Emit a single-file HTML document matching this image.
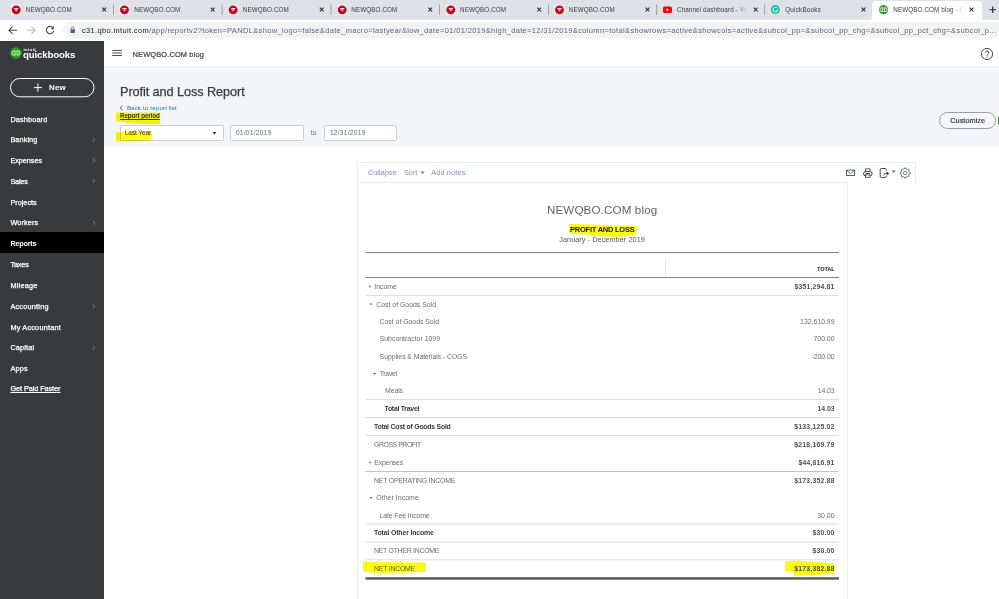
<!DOCTYPE html>
<html lang="en">
<head>
<meta charset="utf-8">
<title>NEWQBO.COM blog - QuickBooks</title>
<style>
*{box-sizing:border-box;margin:0;padding:0}
html,body{width:999px;height:599px;overflow:hidden;background:#fff}
body{position:relative;font-family:"Liberation Sans",sans-serif}
.t{position:absolute;white-space:nowrap}
.a{position:absolute}
.yt,.act{overflow:hidden;width:72px;-webkit-mask-image:linear-gradient(90deg,#000 82%,transparent 98%);mask-image:linear-gradient(90deg,#000 82%,transparent 98%)}
#tabbar{left:0;top:0;width:999px;height:19.5px;background:#dee1e6}
#addr{left:0;top:19.5px;width:999px;height:21.5px;background:#fff}
#pill{left:62.6px;top:21.7px;width:940px;height:16.8px;border-radius:9px;background:#f1f3f4}
#side{left:0;top:41px;width:104px;height:558px;background:#393a3d}
#active{left:0;top:232px;width:104px;height:21px;background:#000}
#hdr{left:104px;top:41px;width:895px;height:25px;background:#fff}
#gray{left:104px;top:66px;width:895px;height:81px;background:#f4f5f8}
.sep{width:1px;height:10px;top:5px;background:#9a9da3}
.inp{background:#fff;border:1px solid #cbced4;border-radius:1.5px;top:124.8px;height:16px}
.hl{background:#fcf81c}
.ln{height:1px;background:#e3e4e6;left:365.5px;width:473.5px}
</style>
</head>
<body>
<div class="a" id="tabbar"></div>
<div class="a" id="addr"></div>
<div class="a" id="pill"></div>
<div class="a" id="side"></div>
<div class="a" id="active"></div>
<div class="a" id="hdr"></div>
<div class="a" id="gray"></div>
<!-- ===== tab bar ===== -->
<div class="a" id="acttab" style="left:871.5px;top:1px;width:110px;height:19.5px;background:#fff;border-radius:4px 4px 0 0"></div>
<svg class="a" style="left:0;top:0" width="999" height="41" viewBox="0 0 999 41">
  <!-- active tab foot curves -->
  <path d="M868.5 20 Q871.5 20 871.5 17 V20 Z" fill="#fff"/>
  <path d="M984.5 20 Q981.5 20 981.5 17 V20 Z" fill="#fff"/>
  <!-- favicons: red circles -->
  <g id="fav">
    <g fill="#eceef2"><rect x="11.1" y="4.7" width="10.2" height="10.2" rx="1"/><rect x="119.4" y="4.7" width="10.2" height="10.2" rx="1"/><rect x="228.0" y="4.7" width="10.2" height="10.2" rx="1"/><rect x="337.1" y="4.7" width="10.2" height="10.2" rx="1"/><rect x="445.7" y="4.7" width="10.2" height="10.2" rx="1"/><rect x="554.4" y="4.7" width="10.2" height="10.2" rx="1"/></g>
    <g fill="#d0021b"><circle cx="16.2" cy="9.85" r="4.45"/><circle cx="124.5" cy="9.85" r="4.45"/><circle cx="233.1" cy="9.85" r="4.45"/><circle cx="342.2" cy="9.85" r="4.45"/><circle cx="450.8" cy="9.85" r="4.45"/><circle cx="559.5" cy="9.85" r="4.45"/></g>
    <g fill="#fff" opacity=".92"><path d="M14.05 7.9h4.3l-.35 1.5h-3.6zM15.10 9.9h2.2l-1.1 1.5z"/><path d="M122.35 7.9h4.3l-.35 1.5h-3.6zM123.40 9.9h2.2l-1.1 1.5z"/><path d="M230.95 7.9h4.3l-.35 1.5h-3.6zM232.00 9.9h2.2l-1.1 1.5z"/><path d="M340.05 7.9h4.3l-.35 1.5h-3.6zM341.10 9.9h2.2l-1.1 1.5z"/><path d="M448.65 7.9h4.3l-.35 1.5h-3.6zM449.70 9.9h2.2l-1.1 1.5z"/><path d="M557.35 7.9h4.3l-.35 1.5h-3.6zM558.40 9.9h2.2l-1.1 1.5z"/></g>
  </g>
  <!-- youtube -->
  <rect x="663" y="6.6" width="9" height="6.3" rx="1.6" fill="#f00"/>
  <path d="M666.5 8.2l2.7 1.55-2.7 1.55z" fill="#fff"/>
  <!-- grammarly-like G -->
  <circle cx="775.3" cy="9.6" r="4.5" fill="#15c39a"/>
  <path d="M777.4 8.3a2.4 2.4 0 1 0 .3 2.1h-2" fill="none" stroke="#fff" stroke-width="1"/>
  <!-- qb active favicon -->
  <circle cx="883.5" cy="9.7" r="4.6" fill="#2ca01c"/>
  <path d="M882.6 7.7h-.6a2 2 0 0 0 0 4h.3M884.4 11.7h.6a2 2 0 0 0 0-4h-.3M882.6 7.7v4.4M884.4 7.3v4.4" stroke="#fff" stroke-width=".8" fill="none"/>
  <!-- close x marks -->
  <g stroke="#202124" stroke-width="1.05" fill="none">
    <path d="M102.3 7.7l3.8 3.8m0-3.8l-3.8 3.8"/>
    <path d="M210.8 7.7l3.8 3.8m0-3.8l-3.8 3.8"/>
    <path d="M319.8 7.7l3.8 3.8m0-3.8l-3.8 3.8"/>
    <path d="M428.3 7.7l3.8 3.8m0-3.8l-3.8 3.8"/>
    <path d="M537.3 7.7l3.8 3.8m0-3.8l-3.8 3.8"/>
    <path d="M645.6 7.7l3.8 3.8m0-3.8l-3.8 3.8"/>
    <path d="M753.8 7.7l3.8 3.8m0-3.8l-3.8 3.8"/>
    <path d="M861.6 7.7l3.8 3.8m0-3.8l-3.8 3.8"/>
    <path d="M969.6 7.7l3.8 3.8m0-3.8l-3.8 3.8"/>
    <path d="M989.5 9.7h6.4m-3.2-3.2v6.4" stroke-width="1.1"/>
  </g>
  <!-- separators -->
  <g fill="#8d9095">
    <rect x="113" y="4.5" width=".8" height="10.5"/><rect x="221.7" y="4.5" width=".8" height="10.5"/>
    <rect x="330.6" y="4.5" width=".8" height="10.5"/><rect x="439" y="4.5" width=".8" height="10.5"/>
    <rect x="548.2" y="4.5" width=".8" height="10.5"/><rect x="656.3" y="4.5" width=".8" height="10.5"/>
    <rect x="764.3" y="4.5" width=".8" height="10.5"/>
  </g>
  <!-- nav arrows -->
  <g stroke="#4a4d51" stroke-width="1.1" fill="none" stroke-linecap="round" stroke-linejoin="round">
    <path d="M16.6 30.3H9m3.3-3.4L8.9 30.3l3.4 3.4"/>
    <path d="M27.4 30.3H35m-3.3-3.4l3.4 3.4-3.4 3.4" stroke="#b8bbbf"/>
    <path d="M53 27.7a3.7 3.7 0 1 0 .6 3.6"/>
  </g>
  <path d="M53.9 26v3.3h-3.3z" fill="#4a4d51"/>
  <!-- lock -->
  <rect x="70.4" y="29.2" width="4.6" height="3.8" rx=".5" fill="#5f6368"/>
  <path d="M71.4 29.4v-1.1a1.3 1.3 0 0 1 2.6 0v1.1" fill="none" stroke="#5f6368" stroke-width=".8"/>
</svg>
<!-- ===== QBO header ===== -->
<svg class="a" style="left:104px;top:41px" width="895" height="25" viewBox="104 41 895 25">
  <g stroke="#393a3d" stroke-width="0.9"><path d="M112.2 50.4h9.7M112.2 52.95h9.7M112.2 55.5h9.7"/></g>
  <circle cx="987" cy="54" r="5.6" fill="none" stroke="#393a3d" stroke-width=".9"/>
  <path d="M985.4 52.6a1.7 1.7 0 1 1 2.5 1.5c-.6.4-.9.7-.9 1.4" fill="none" stroke="#393a3d" stroke-width=".9"/>
  <circle cx="987" cy="57.1" r=".6" fill="#393a3d"/>
</svg>
<!-- ===== sidebar ===== -->
<svg class="a" style="left:0;top:41px" width="104" height="558" viewBox="0 41 104 558">
  <circle cx="16" cy="53" r="5.7" fill="#2ca01c"/>
  <path d="M15 50.9h-.9a2.1 2.1 0 0 0 0 4.2h.2M17 55.1h.9a2.1 2.1 0 0 0 0-4.2h-.2M15 50.9v4.9M17 50.2v4.9" stroke="#fff" stroke-width=".85" fill="none"/>
  <rect x="10.5" y="78.5" width="83.5" height="18.3" rx="9.15" fill="none" stroke="#fff" stroke-width="1"/>
  <path d="M33.8 87.6h8.2M37.9 83.5v8.2" stroke="#fff" stroke-width="1"/>
  <g stroke="#8d9096" stroke-width=".8" fill="none">
    <path d="M92.8 137.6l2 2.1-2 2.1"/><path d="M92.8 158.2l2 2.1-2 2.1"/><path d="M92.8 178.9l2 2.1-2 2.1"/>
    <path d="M92.8 220.6l2 2.1-2 2.1"/><path d="M92.8 304.3l2 2.1-2 2.1"/><path d="M92.8 345.6l2 2.1-2 2.1"/>
  </g>
</svg>
<!-- ===== filter area ===== -->
<svg class="a" style="left:104px;top:100px" width="160" height="50" viewBox="104 100 160 50">
  <path d="M122.3 105.6l-1.9 2.3 1.9 2.3" stroke="#0077c5" stroke-width="1" fill="none"/>
</svg>
<div class="a inp" style="left:119.5px;width:104.3px"></div>
<div class="a inp" style="left:230.2px;width:73.4px"></div>
<div class="a inp" style="left:324px;width:73.2px"></div>
<svg class="a" style="left:104px;top:120px" width="160" height="30" viewBox="104 120 160 30">
  <path d="M212.6 131.9h3.8l-1.9 2.6z" fill="#222"/>
</svg>
<div class="a" style="left:939px;top:111.5px;width:56.8px;height:17.4px;border:1px solid #9a9da3;border-radius:9px;background:#f6f7f9"></div>
<div class="a" style="left:997.7px;top:115.5px;width:3px;height:9px;background:#2ca01c;border-radius:2px 0 0 2px"></div>
<!-- ===== report card ===== -->
<div class="a" style="left:357px;top:162px;width:558.7px;height:21px;border:1px solid #e9eef5;border-bottom:none"></div>
<div class="a" style="left:357px;top:182px;width:491px;height:420px;border:1px solid #e9eef5"></div>
<svg class="a" style="left:400px;top:160px" width="520" height="26" viewBox="400 160 520 26">
  <path d="M420.4 171.6h4.2l-2.1 2.4z" fill="#6b7c93"/>
  <!-- mail -->
  <rect x="846.4" y="170.1" width="8.3" height="5.3" fill="none" stroke="#393a3d" stroke-width=".8"/>
  <path d="M846.6 170.4l3.95 3.2 3.95-3.2" fill="none" stroke="#393a3d" stroke-width=".8"/>
  <!-- print -->
  <path d="M865.5 171.4v-2.6h4.6v2.6" fill="none" stroke="#393a3d" stroke-width=".8"/>
  <rect x="863.6" y="171.6" width="8.4" height="4.1" rx="1.7" fill="#fff" stroke="#393a3d" stroke-width="1"/>
  <rect x="865.6" y="174.9" width="4.4" height="2.4" fill="#fff" stroke="#393a3d" stroke-width=".8"/>
  <path d="M865.4 173.5h4.8" stroke="#393a3d" stroke-width=".9"/>
  <!-- export -->
  <path d="M886.3 170.6v-1a1.1 1.1 0 0 0-1.1-1.1h-3.9a1.1 1.1 0 0 0-1.1 1.1v6.7a1.1 1.1 0 0 0 1.1 1.1h3.9a1.1 1.1 0 0 0 1.1-1.1v-.7" fill="none" stroke="#393a3d" stroke-width=".95"/>
  <path d="M883.6 175.3c.3-1.5 1.3-2 3.4-2" fill="none" stroke="#393a3d" stroke-width=".95"/>
  <path d="M886.7 171.4l2.5 2-2.5 2z" fill="#393a3d"/>
  <path d="M891.5 170.5h4.3l-2.15 2.5z" fill="#4a7fb0"/>
  <!-- gear -->
  <g fill="none" stroke="#55575c" stroke-width=".75" stroke-linejoin="round">
    <circle cx="905.2" cy="173" r="1.75"/>
    <path d="M904.25 169.17L904.44 167.96L905.96 167.96L906.15 169.17L907.24 169.62L908.23 168.90L909.30 169.97L908.58 170.96L909.03 172.05L910.24 172.24L910.24 173.76L909.03 173.95L908.58 175.04L909.30 176.03L908.23 177.10L907.24 176.38L906.15 176.83L905.96 178.04L904.44 178.04L904.25 176.83L903.16 176.38L902.17 177.10L901.10 176.03L901.82 175.04L901.37 173.95L900.16 173.76L900.16 172.24L901.37 172.05L901.82 170.96L901.10 169.97L902.17 168.90L903.16 169.62Z"/>
  </g>
</svg>
<!-- highlights in report -->
<svg class="a" style="left:357px;top:220px" width="491" height="379" viewBox="357 220 491 379">


  <!-- table lines -->
  <rect x="365.5" y="252" width="473.5" height="1" fill="#808185"/>
  <rect x="365.5" y="277" width="473.5" height="1" fill="#808185"/>
  <rect x="665" y="259" width=".8" height="18" fill="#dcdfe3"/>
  <g fill="#dcdde0">
    <rect x="365.5" y="295" width="473.5" height="1"/>
    <rect x="365.5" y="399" width="473.5" height="1"/>
    <rect x="365.5" y="417" width="473.5" height="1"/>
    <rect x="365.5" y="435" width="473.5" height="1"/>
    <rect x="365.5" y="523.6" width="473.5" height="1"/>
    <rect x="365.5" y="541.6" width="473.5" height="1"/>
    <rect x="365.5" y="559.3" width="473.5" height="1"/>
  </g>
  <rect x="365.5" y="471" width="473.5" height="1" fill="#c0c2c6"/>
  <rect x="365.5" y="577.2" width="473.5" height="2.5" fill="#5a5b5f"/>
  <!-- carets -->
  <g fill="#6b6c72">
    <path d="M369.6 285l1.7 1.5-1.7 1.5z"/>
    <path d="M369.6 460.8l1.7 1.5-1.7 1.5z"/>
    <path d="M369.5 303.4h3.2l-1.6 1.9z"/>
    <path d="M373 373h3.2l-1.6 1.9z"/>
    <path d="M369.5 497h3.2l-1.6 1.9z"/>
  </g>
</svg>

<span class="t" id="t0" style="top:5.01px;font-size:6.3px;line-height:10.08px;color:#3a3c40;left:25.75px;letter-spacing:0.106px;">NEWQBO.COM</span>
<span class="t" id="t1" style="top:5.01px;font-size:6.3px;line-height:10.08px;color:#3a3c40;left:134.25px;letter-spacing:0.106px;">NEWQBO.COM</span>
<span class="t" id="t2" style="top:5.01px;font-size:6.3px;line-height:10.08px;color:#3a3c40;left:242.75px;letter-spacing:0.106px;">NEWQBO.COM</span>
<span class="t" id="t3" style="top:5.01px;font-size:6.3px;line-height:10.08px;color:#3a3c40;left:351.25px;letter-spacing:0.106px;">NEWQBO.COM</span>
<span class="t" id="t4" style="top:5.01px;font-size:6.3px;line-height:10.08px;color:#3a3c40;left:460.0px;letter-spacing:0.106px;">NEWQBO.COM</span>
<span class="t" id="t5" style="top:5.01px;font-size:6.3px;line-height:10.08px;color:#3a3c40;left:568.75px;letter-spacing:0.106px;">NEWQBO.COM</span>
<span class="t yt" id="t6" style="top:5.01px;font-size:6.3px;line-height:10.08px;color:#3a3c40;left:677px;letter-spacing:0.106px;">Channel dashboard - YouTube</span>
<span class="t" id="t7" style="top:5.01px;font-size:6.3px;line-height:10.08px;color:#3a3c40;left:785.25px;letter-spacing:0.219px;">QuickBooks</span>
<span class="t act" id="t8" style="top:5.01px;font-size:6.3px;line-height:10.08px;color:#3a3c40;left:893.25px;letter-spacing:0.106px;">NEWQBO.COM blog - QuickBooks</span>
<span class="t url" id="t9" style="top:25.00px;font-size:7.5px;line-height:12.0px;color:#63676c;left:82px;letter-spacing:0.344px;"><span style="color:#202124">c31.qbo.intuit.com</span>/app/reportv2?token=PANDL&amp;show_logo=false&amp;date_macro=lastyear&amp;low_date=01/01/2019&amp;high_date=12/31/2019&amp;column=total&amp;showrows=active&amp;showcols=active&amp;subcol_pp=&amp;subcol_pp_chg=&amp;subcol_pp_pct_chg=&amp;subcol_p...</span>
<span class="t" id="t10" style="top:49.00px;font-size:7.4px;line-height:11.84px;color:#393a3d;left:132.6px;letter-spacing:0.160px;-webkit-text-stroke:.2px #393a3d;">NEWQBO.COM blog</span>
<span class="t" id="t11" style="top:114.00px;font-size:7.3px;line-height:11.68px;color:#ffffff;left:10.4px;letter-spacing:0.144px;-webkit-text-stroke:.25px #fff;">Dashboard</span>
<span class="t" id="t12" style="top:134.00px;font-size:7.3px;line-height:11.68px;color:#ffffff;left:10.4px;letter-spacing:0.089px;-webkit-text-stroke:.25px #fff;">Banking</span>
<span class="t" id="t13" style="top:155.01px;font-size:7.3px;line-height:11.68px;color:#ffffff;left:10.4px;letter-spacing:-0.043px;-webkit-text-stroke:.25px #fff;">Expenses</span>
<span class="t" id="t14" style="top:176.00px;font-size:7.3px;line-height:11.68px;color:#ffffff;left:10.4px;letter-spacing:-0.193px;-webkit-text-stroke:.25px #fff;">Sales</span>
<span class="t" id="t15" style="top:197.00px;font-size:7.3px;line-height:11.68px;color:#ffffff;left:10.4px;letter-spacing:-0.007px;-webkit-text-stroke:.25px #fff;">Projects</span>
<span class="t" id="t16" style="top:217.00px;font-size:7.3px;line-height:11.68px;color:#ffffff;left:10.4px;letter-spacing:0.138px;-webkit-text-stroke:.25px #fff;">Workers</span>
<span class="t" id="t17" style="top:238.01px;font-size:7.3px;line-height:11.68px;color:#ffffff;font-weight:700;left:10.4px;letter-spacing:-0.225px;">Reports</span>
<span class="t" id="t18" style="top:259.00px;font-size:7.3px;line-height:11.68px;color:#ffffff;left:10.4px;letter-spacing:-0.133px;-webkit-text-stroke:.25px #fff;">Taxes</span>
<span class="t" id="t19" style="top:280.01px;font-size:7.3px;line-height:11.68px;color:#ffffff;left:10.4px;letter-spacing:0.234px;-webkit-text-stroke:.25px #fff;">Mileage</span>
<span class="t" id="t20" style="top:301.01px;font-size:7.3px;line-height:11.68px;color:#ffffff;left:10.4px;letter-spacing:0.229px;-webkit-text-stroke:.25px #fff;">Accounting</span>
<span class="t" id="t21" style="top:322.00px;font-size:7.3px;line-height:11.68px;color:#ffffff;left:10.4px;letter-spacing:0.202px;-webkit-text-stroke:.25px #fff;">My Accountant</span>
<span class="t" id="t22" style="top:342.00px;font-size:7.3px;line-height:11.68px;color:#ffffff;left:10.4px;letter-spacing:0.169px;-webkit-text-stroke:.25px #fff;">Capital</span>
<span class="t" id="t23" style="top:363.00px;font-size:7.3px;line-height:11.68px;color:#ffffff;left:10.4px;letter-spacing:0.240px;-webkit-text-stroke:.25px #fff;">Apps</span>
<span class="t" id="t24" style="top:383.01px;font-size:7.3px;line-height:11.68px;color:#ffffff;left:10.4px;letter-spacing:-0.074px;text-decoration:underline;-webkit-text-stroke:.25px #fff;">Get Paid Faster</span>
<span class="t" id="t25" style="top:82.01px;font-size:8px;line-height:12.8px;color:#ffffff;font-weight:700;left:49px;letter-spacing:0.182px;">New</span>
<span class="t" id="t26" style="top:47.01px;font-size:9.7px;line-height:15.52px;color:#ffffff;font-weight:700;left:23.1px;letter-spacing:-0.184px;">quickbooks</span>
<span class="t" id="t27" style="top:47.01px;font-size:4.2px;line-height:6.72px;color:#ffffff;font-weight:700;left:23.5px;letter-spacing:0.394px;">intuit</span>
<span class="t" id="t28" style="top:82.00px;font-size:12.7px;line-height:20.32px;color:#393a3d;left:120px;letter-spacing:-0.075px;-webkit-text-stroke:.25px #393a3d;">Profit and Loss Report</span>
<span class="t" id="t29" style="top:103.00px;font-size:6.1px;line-height:9.76px;color:#0077c5;left:126.9px;letter-spacing:0.154px;">Back to report list</span>
<span class="t" id="t30" style="top:111.01px;font-size:6.3px;line-height:10.08px;color:#393a3d;font-weight:700;left:120px;letter-spacing:-0.122px;text-decoration:underline;">Report period</span>
<span class="t" id="t31" style="top:128.01px;font-size:6.6px;line-height:10.56px;color:#393a3d;left:124.8px;letter-spacing:-0.122px;">Last Year</span>
<span class="t" id="t32" style="top:128.01px;font-size:6.6px;line-height:10.56px;color:#6b6c72;left:235.9px;letter-spacing:0.268px;">01/01/2019</span>
<span class="t" id="t33" style="top:128.01px;font-size:6.6px;line-height:10.56px;color:#6b6c72;left:310.8px;letter-spacing:0.200px;">to</span>
<span class="t" id="t34" style="top:128.01px;font-size:6.6px;line-height:10.56px;color:#6b6c72;left:329.9px;letter-spacing:0.268px;">12/31/2019</span>
<span class="t" id="t35" style="top:115.01px;font-size:7.3px;line-height:11.68px;color:#393a3d;left:950.2px;letter-spacing:0.059px;-webkit-text-stroke:.2px #393a3d;">Customize</span>
<span class="t" id="t36" style="top:167.00px;font-size:7.3px;line-height:11.68px;color:#7d90ad;left:367.9px;letter-spacing:0.074px;">Collapse</span>
<span class="t" id="t37" style="top:167.00px;font-size:7.3px;line-height:11.68px;color:#7d90ad;left:404px;letter-spacing:-0.023px;">Sort</span>
<span class="t" id="t38" style="top:167.00px;font-size:7.3px;line-height:11.68px;color:#7d90ad;left:431.2px;letter-spacing:0.169px;">Add notes</span>
<span class="t" id="t39" style="top:201.00px;font-size:11.6px;line-height:18.56px;color:#606267;left:546.9px;letter-spacing:0.151px;">NEWQBO.COM blog</span>
<span class="t" id="t40" style="top:224.01px;font-size:7.5px;line-height:12.0px;color:#1a1a1a;font-weight:700;left:570px;letter-spacing:-0.237px;">PROFIT AND LOSS</span>
<span class="t" id="t41" style="top:234.00px;font-size:7.3px;line-height:11.68px;color:#55575c;left:559.2px;letter-spacing:0.058px;">January - December 2019</span>
<span class="t" id="t42" style="top:265.01px;font-size:5.7px;line-height:9.12px;color:#222;font-weight:700;right:164.40px;letter-spacing:-0.148px;">TOTAL</span>
<span class="t" id="t43" style="top:281.00px;font-size:6.9px;line-height:11.04px;color:#6b6c72;left:374.3px;letter-spacing:-0.002px;">Income</span>
<span class="t" id="t44" style="top:281.00px;font-size:6.9px;line-height:11.04px;color:#505157;font-weight:700;right:164.50px;letter-spacing:0.152px;">$351,294.81</span>
<span class="t" id="t45" style="top:299.01px;font-size:6.9px;line-height:11.04px;color:#6b6c72;left:376.3px;letter-spacing:-0.004px;">Cost of Goods Sold</span>
<span class="t" id="t46" style="top:316.00px;font-size:6.9px;line-height:11.04px;color:#6b6c72;left:379.6px;letter-spacing:-0.020px;">Cost of Goods Sold</span>
<span class="t" id="t47" style="top:316.00px;font-size:6.9px;line-height:11.04px;color:#6b6c72;right:164.50px;letter-spacing:-0.010px;">132,610.99</span>
<span class="t" id="t48" style="top:333.01px;font-size:6.9px;line-height:11.04px;color:#6b6c72;left:379.6px;letter-spacing:0.019px;">Subcontractor 1099</span>
<span class="t" id="t49" style="top:333.01px;font-size:6.9px;line-height:11.04px;color:#6b6c72;right:164.50px;letter-spacing:-0.013px;">700.00</span>
<span class="t" id="t50" style="top:351.00px;font-size:6.9px;line-height:11.04px;color:#6b6c72;left:379.6px;letter-spacing:-0.064px;">Supplies &amp; Materials - COGS</span>
<span class="t" id="t51" style="top:351.00px;font-size:6.9px;line-height:11.04px;color:#6b6c72;right:164.50px;letter-spacing:-0.039px;">-200.00</span>
<span class="t" id="t52" style="top:368.00px;font-size:6.9px;line-height:11.04px;color:#6b6c72;left:379.7px;letter-spacing:-0.282px;">Travel</span>
<span class="t" id="t53" style="top:385.00px;font-size:6.9px;line-height:11.04px;color:#6b6c72;left:385.0px;letter-spacing:-0.078px;">Meals</span>
<span class="t" id="t54" style="top:385.00px;font-size:6.9px;line-height:11.04px;color:#6b6c72;right:164.50px;letter-spacing:-0.090px;">14.03</span>
<span class="t" id="t55" style="top:403.01px;font-size:6.9px;line-height:11.04px;color:#393a3d;font-weight:700;left:384.5px;letter-spacing:-0.266px;">Total Travel</span>
<span class="t" id="t56" style="top:403.01px;font-size:6.9px;line-height:11.04px;color:#505157;font-weight:700;right:164.50px;letter-spacing:-0.050px;">14.03</span>
<span class="t" id="t57" style="top:421.00px;font-size:6.9px;line-height:11.04px;color:#393a3d;font-weight:700;left:374.0px;letter-spacing:-0.232px;">Total Cost of Goods Sold</span>
<span class="t" id="t58" style="top:421.00px;font-size:6.9px;line-height:11.04px;color:#505157;font-weight:700;right:164.50px;letter-spacing:0.170px;">$133,125.02</span>
<span class="t" id="t59" style="top:439.00px;font-size:6.9px;line-height:11.04px;color:#6b6c72;left:374.0px;letter-spacing:-0.432px;">GROSS PROFIT</span>
<span class="t" id="t60" style="top:439.00px;font-size:6.9px;line-height:11.04px;color:#505157;font-weight:700;right:164.50px;letter-spacing:0.170px;">$218,169.79</span>
<span class="t" id="t61" style="top:457.01px;font-size:6.9px;line-height:11.04px;color:#6b6c72;left:374.3px;letter-spacing:-0.196px;">Expenses</span>
<span class="t" id="t62" style="top:457.01px;font-size:6.9px;line-height:11.04px;color:#505157;font-weight:700;right:164.50px;letter-spacing:0.160px;">$44,816.91</span>
<span class="t" id="t63" style="top:475.00px;font-size:6.9px;line-height:11.04px;color:#6b6c72;left:374.0px;letter-spacing:-0.201px;">NET OPERATING INCOME</span>
<span class="t" id="t64" style="top:475.00px;font-size:6.9px;line-height:11.04px;color:#505157;font-weight:700;right:164.50px;letter-spacing:0.170px;">$173,352.88</span>
<span class="t" id="t65" style="top:492.00px;font-size:6.9px;line-height:11.04px;color:#6b6c72;left:376.3px;letter-spacing:0.062px;">Other Income</span>
<span class="t" id="t66" style="top:510.01px;font-size:6.9px;line-height:11.04px;color:#6b6c72;left:379.6px;letter-spacing:-0.115px;">Late Fee Income</span>
<span class="t" id="t67" style="top:510.01px;font-size:6.9px;line-height:11.04px;color:#6b6c72;right:164.50px;letter-spacing:0.010px;">30.00</span>
<span class="t" id="t68" style="top:527.01px;font-size:6.9px;line-height:11.04px;color:#393a3d;font-weight:700;left:374.0px;letter-spacing:-0.143px;">Total Other Income</span>
<span class="t" id="t69" style="top:527.01px;font-size:6.9px;line-height:11.04px;color:#505157;font-weight:700;right:164.50px;letter-spacing:0.154px;">$30.00</span>
<span class="t" id="t70" style="top:545.00px;font-size:6.9px;line-height:11.04px;color:#6b6c72;left:374.0px;letter-spacing:-0.254px;">NET OTHER INCOME</span>
<span class="t" id="t71" style="top:545.00px;font-size:6.9px;line-height:11.04px;color:#505157;font-weight:700;right:164.50px;letter-spacing:0.154px;">$30.00</span>
<span class="t" id="t72" style="top:563.01px;font-size:6.9px;line-height:11.04px;color:#6b6c72;left:374.0px;letter-spacing:-0.214px;">NET INCOME</span>
<span class="t" id="t73" style="top:563.01px;font-size:6.9px;line-height:11.04px;color:#505157;font-weight:700;right:164.50px;letter-spacing:0.170px;">$173,382.88</span>
<svg class="a" style="left:0;top:0;mix-blend-mode:multiply" width="999" height="599" viewBox="0 0 999 599">
<path d="M116 112.5L160.1 112.5L160.1 124.2L146 124.2L130 123L116 121.6Z" fill="#fcf81c"/>
<path d="M116 132.2L151.5 131.6L151.5 140.6L116 141.6Z" fill="#fcf81c"/>
<path d="M568.9 224L600 224.8L636.6 226.1L636.6 234.2L619.6 236.9L598.3 236.3L585.5 234.6L568.9 233.3Z" fill="#fcf81c"/>
<path d="M363 561.2L380 562L426 562.4L426 572L400 572.7L374 573L363 571.2Z" fill="#fcf81c"/>
<path d="M784.8 561.2L797 560.6L815 562L834.6 563.2L834.6 573L821 574.8L798 576L793.2 576L793.2 571.2L784.8 571.2Z" fill="#fcf81c"/>
</svg>

</body>
</html>
